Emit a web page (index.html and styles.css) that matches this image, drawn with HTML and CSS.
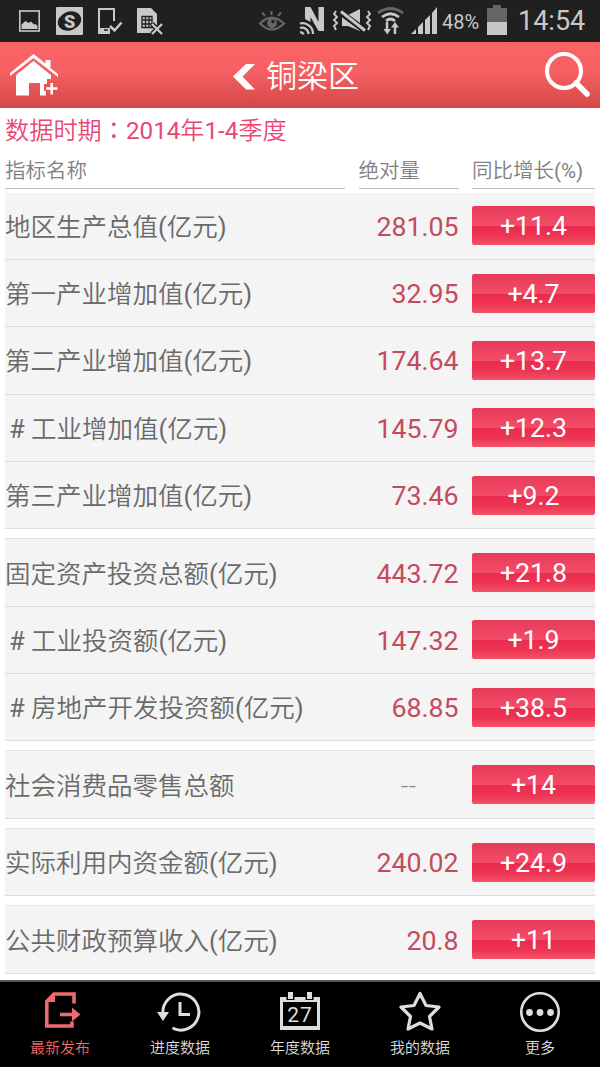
FILE: index.html
```html
<!DOCTYPE html>
<html lang="zh-CN">
<head>
  <meta charset="UTF-8">
  <title>铜梁区</title>
  <link rel="stylesheet" href="styles.css">
</head>
<body>

  <div class="status">
    <svg width="600" height="42" viewBox="0 0 600 42" fill="none" stroke="#c8c8c8">
      <!-- picture -->
      <rect x="19.8" y="11" width="19.4" height="20" stroke-width="1.6"/>
      <path d="M21.500 29v-4.500l4-3.500 3 2 2.500-1.500 3 3 1.500-.5 2 2v3z" fill="#c8c8c8" stroke="none"/>
      <!-- S badge -->
      <rect x="56" y="7" width="27" height="28" rx="1" fill="#c8c8c8" stroke="none"/>
      <ellipse cx="69.5" cy="21" rx="12" ry="9.3" transform="rotate(-20 69.5 21)" fill="#202020" stroke="none"/>
      <text x="69.7" y="27.5" class="badge-s">S</text>
      <!-- phone check -->
      <path d="M114 21V9H99v23.500h10" stroke-width="2"/>
      <path d="M98 28h12v6H98z" fill="#c8c8c8" stroke="none"/>
      <path d="M104 30h4" stroke="#202020" stroke-width="1.500"/>
      <path d="M110 26l4.500 4.500 7-8" stroke-width="2.500"/>
      <!-- sim card -->
      <path d="M137 8h14l6 6v11l-4 8h-16z" fill="#c8c8c8" stroke="none"/>
      <path d="M142 16.500h10v11h-10zM142 20h10M142 24h10M145.500 17v10M149 17v10" stroke="#202020" stroke-width="1.300"/>
      <path d="M152 24l10 10M162 24l-10 10" stroke="#202020" stroke-width="5"/>
      <path d="M152 24l10 10M162 24l-10 10" stroke-width="2.300"/>
      <!-- eye -->
      <g stroke="#666">
        <path d="M260 23.500q11.500-11.500 24 0q-12 12-24 0z" stroke-width="2.300"/>
        <circle cx="272" cy="23" r="5" fill="#666" stroke="none"/>
        <circle cx="273" cy="21.500" r="1.700" fill="#202020" stroke="none"/>
        <path d="M271.500 15v-4M265 16l-3-3.500M278 16l3-3.500" stroke-width="2"/>
      </g>
      <!-- nfc -->
      <path d="M305 19V7h5.500l8 15V7h5.500v24h-5.500l-8-14v5z" fill="#c8c8c8" stroke="none"/>
      <path d="M300 23.500a10.500 10.500 0 0 1 13 10.500M300 28a6.500 6.500 0 0 1 8.500 6M300 32.500a3 3 0 0 1 3.500 2" stroke-width="2.300"/>
      <!-- mute, vibrate -->
      <path d="M342 15h6l12-6v22l-12-5h-6z" fill="#c8c8c8" stroke="none"/>
      <path d="M340 12l27 20" stroke="#202020" stroke-width="6"/>
      <path d="M341 11.500l24 19" stroke-width="3"/>
      <path d="M336 11l-2 3 3 3-3 3 3 3-3 3 2 4M368 11l2 3-3 3 3 3-3 3 3 3-2 4" stroke-width="1.900"/>
      <!-- wifi -->
      <path d="M378 13q12.500-9 25 0" stroke="#666" stroke-width="2.800"/>
      <path d="M382 17q8.500-6.500 17 0M386 21q4.500-4 9 0" stroke-width="2.800"/>
      <path d="M387 22v8M395 34v-8" stroke-width="2.500"/>
      <path d="M383.500 29h7.500l-3.700 5.500zM391 27.500h8l-4-5.500z" fill="#c8c8c8" stroke="none"/>
      <!-- signal -->
      <path d="M411 34h5v-5zM418 34h5V22l-5 5zM425 34h5V15l-5 5zM432 34h5V7l-5 6z" fill="#c8c8c8" stroke="none"/>
      <text x="442" y="28.500" class="battery-text">48%</text>
      <!-- battery -->
      <path d="M487 22V8h6V5h8v3h6v14z" fill="#666" stroke="none"/>
      <path d="M487 22h20v13h-20z" fill="#c8c8c8" stroke="none"/>
      <text x="518" y="30" class="clock">14:54</text>
    </svg>
  </div>

  <div class="header">
    <svg class="home" width="50" height="46" viewBox="0 0 50 46" fill="#fff">
      <path d="M0 22V19L23.500 0l12 9.500V6h5v8L48 20v3L23.500 4z"/>
      <path d="M6 21L23.500 7l17.500 14v4h-4v5h-3v7h2v4.500h-6V29H19v12.500H6z"/>
      <path d="M36 34.500h11.500M41.700 29v11.500" stroke="#fff" stroke-width="2.500"/>
    </svg>
    <div class="title">
      <svg width="22" height="26" viewBox="0 0 22 26" fill="#fff"><path d="M13 0h9L9.500 12.500 22 25.500h-9L0 12.500z"/></svg>
      <span>铜梁区</span>
    </div>
    <svg class="search" width="48" height="48" viewBox="0 0 48 48" fill="none" stroke="#fff">
      <circle cx="20" cy="20" r="17" stroke-width="4"/>
      <path d="M32 32l11 11" stroke-width="5.500" stroke-linecap="round"/>
    </svg>
  </div>

  <div class="content">
    <div class="period">数据时期<span class="colon" lang="zh-TW">：</span>2014年1-4季度</div>
    <div class="columns">
      <div>指标名称</div>
      <div>绝对量</div>
      <div>同比增长(%)</div>
    </div>

    <div class="group">
      <div class="row"><span class="name">地区生产总值(亿元)</span><span class="value">281.05</span><span class="rate">+11.4</span></div>
      <div class="row"><span class="name">第一产业增加值(亿元)</span><span class="value">32.95</span><span class="rate">+4.7</span></div>
      <div class="row"><span class="name">第二产业增加值(亿元)</span><span class="value">174.64</span><span class="rate">+13.7</span></div>
      <div class="row"><span class="name sub"># 工业增加值(亿元)</span><span class="value">145.79</span><span class="rate">+12.3</span></div>
      <div class="row"><span class="name">第三产业增加值(亿元)</span><span class="value">73.46</span><span class="rate">+9.2</span></div>
    </div>
    <div class="group">
      <div class="row"><span class="name">固定资产投资总额(亿元)</span><span class="value">443.72</span><span class="rate">+21.8</span></div>
      <div class="row"><span class="name sub"># 工业投资额(亿元)</span><span class="value">147.32</span><span class="rate">+1.9</span></div>
      <div class="row"><span class="name sub"># 房地产开发投资额(亿元)</span><span class="value">68.85</span><span class="rate">+38.5</span></div>
    </div>
    <div class="group">
      <div class="row"><span class="name">社会消费品零售总额</span><span class="value none">--</span><span class="rate">+14</span></div>
    </div>
    <div class="group">
      <div class="row"><span class="name">实际利用内资金额(亿元)</span><span class="value">240.02</span><span class="rate">+24.9</span></div>
    </div>
    <div class="group">
      <div class="row"><span class="name">公共财政预算收入(亿元)</span><span class="value">20.8</span><span class="rate">+11</span></div>
    </div>
  </div>

  <div class="nav">
    <div class="tab active">
      <svg width="44" height="42" viewBox="0 0 44 42" fill="none" stroke="currentColor" stroke-width="3.600">
        <path d="M36 13.500V4H16L8.800 11.500V36H34v-4.500"/>
        <path d="M17 3v9H7.500z" fill="currentColor" stroke="none"/>
        <path d="M22 24.500h13"/>
        <path d="M34 17.500v14l8.500-7z" fill="currentColor" stroke="none"/>
      </svg>
      最新发布
    </div>
    <div class="tab">
      <svg width="44" height="42" viewBox="0 0 44 42" fill="none" stroke="currentColor" stroke-width="3">
        <path d="M5 24A18 18 0 1 1 14.500 38"/>
        <path d="M-1 22h12l-6 9z" fill="currentColor" stroke="none"/>
        <path d="M22 12v12.500h10"/>
      </svg>
      进度数据
    </div>
    <div class="tab">
      <svg width="44" height="42" viewBox="0 0 44 42" fill="none" stroke="currentColor">
        <path d="M2 7h40v33H2z" fill="currentColor" stroke="none"/>
        <path d="M5 12h34v24H5z" fill="#000" stroke="none"/>
        <path d="M12.500 2v8M31.500 2v8" stroke="#000" stroke-width="8"/>
        <path d="M12.500 2v7M31.500 2v7" stroke-width="5"/>
        <text x="22" y="31.500" class="day">27</text>
      </svg>
      年度数据
    </div>
    <div class="tab">
      <svg width="44" height="42" viewBox="0 0 44 42" fill="none" stroke="currentColor" stroke-width="3.200" stroke-linejoin="round">
        <path d="M22 3.500l6 12 13 1.500-9.500 9.500L34 39l-12-6-12 6 2.500-12.500L3 17l13-1.500z"/>
      </svg>
      我的数据
    </div>
    <div class="tab">
      <svg width="44" height="42" viewBox="0 0 44 42" fill="currentColor">
        <circle cx="22" cy="22" r="18.700" fill="none" stroke="currentColor" stroke-width="2.600"/>
        <circle cx="11.500" cy="22.500" r="3.400"/>
        <circle cx="22" cy="22.500" r="3.400"/>
        <circle cx="32.500" cy="22.500" r="3.400"/>
      </svg>
      更多
    </div>
  </div>

</body>
</html>
```
FILE: styles.css
```css
body {
  margin: 0;
  width: 600px;
  height: 1067px;
  display: flex;
  flex-direction: column;
  overflow: hidden;
  background: #fff;
  color: #6a6a6a;
  font-family: Roboto, "Noto Sans CJK SC DemiLight", "Noto Sans CJK SC", sans-serif;
  font-weight: 400;
}

svg {
  display: block;
  flex: none;
  overflow: visible;
}

.status {
  height: 42px;
  background: #202020;
}

.status text {
  stroke: none;
  fill: #c8c8c8;
}

.status .badge-s {
  fill: #c8c8c8;
  font-size: 18px;
  font-weight: 900;
  text-anchor: middle;
}

.battery-text {
  font-size: 20px;
}

.clock {
  font-size: 27px;
}

.header {
  box-sizing: border-box;
  height: 66px;
  display: flex;
  align-items: center;
  justify-content: space-between;
  padding: 0 8px 0 10px;
  background: linear-gradient(#fb6466, #f56062 45%, #d44848);
}

.home {
  margin-top: 4px;
}

.title {
  display: flex;
  align-items: center;
  gap: 11px;
  margin-right: 12px;
  padding-top: 3px;
  color: #fff;
  font-size: 31px;
  line-height: 60px;
}

.content {
  height: 872px;
  padding: 0 5px;
}

.period {
  height: 46px;
  line-height: 42px;
  font-size: 24.2px;
  color: #e84872;
}

.colon {
  font-family: "Noto Sans CJK TC", sans-serif;
}

.columns,
.row {
  display: grid;
  grid-template-columns: 340px 100px 123px;
  column-gap: 13.5px;
}

.columns {
  margin-bottom: 3.7px;
  font-size: 20.5px;
  line-height: 34px;
  color: #808080;
}

.columns div {
  border-bottom: 1px solid #bbb;
}

.group {
  margin-bottom: 10.2px;
  background: #f4f4f4;
  box-shadow: 0 -1px #e4e4e4;
}

.columns + .group {
  box-shadow: none;
}

.row {
  box-sizing: border-box;
  height: 67.3px;
  align-items: center;
  border-bottom: 1px solid #dedede;
  font-size: 25.5px;
  line-height: 36px;
  white-space: nowrap;
}

.name {
  padding-top: 2px;
}

.sub {
  padding-left: 4px;
}

.value {
  padding-top: 2px;
  text-align: right;
  font-size: 26.7px;
  color: #c44a5e;
}

.none {
  text-align: center;
  font-weight: 300;
  color: #888;
}

.rate {
  height: 39px;
  line-height: 41px;
  border-radius: 2px;
  text-align: center;
  font-size: 26.7px;
  color: #fff;
  background: linear-gradient(#e83a5a, #f24c68 50%, #e92c4e 51%, #ee3352 75%, #f25268);
}

.nav {
  box-sizing: border-box;
  height: 87px;
  display: grid;
  grid-template-columns: repeat(5, 1fr);
  border-top: 2px solid #555;
  background: #000;
  color: #ddd;
}

.tab {
  display: flex;
  flex-direction: column;
  align-items: center;
  padding-top: 8px;
  font-size: 15px;
  line-height: 32px;
}

.active {
  color: #f0696c;
}

.day {
  fill: currentColor;
  stroke: none;
  font-size: 21px;
  letter-spacing: 1px;
  text-anchor: middle;
}
```
